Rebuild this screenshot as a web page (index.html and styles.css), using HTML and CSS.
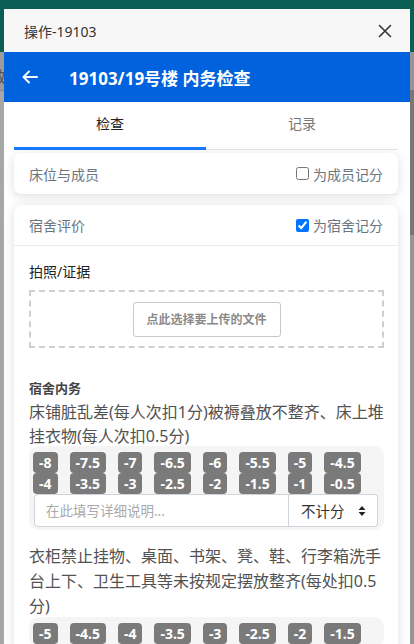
FILE: index.html
```html
<!DOCTYPE html>
<html lang="zh">
<head>
<meta charset="utf-8">
<title>操作-19103</title>
<link rel="stylesheet" href="styles.css">
</head>
<body>
<div class="page">
  <div class="page-top"></div>
  <div class="page-main">
    <div class="page-body">
      <div class="page-sub"><span class="page-glyph">效</span></div>
      <div class="page-rest"></div>
    </div>
    <div class="page-scroll"><div class="page-thumb"></div></div>
  </div>
</div>

<div class="modal">
  <div class="modal-head">
    <span class="modal-title">操作-19103</span>
    <svg class="close" width="14" height="14" viewBox="0 0 14 14"><path d="M1.5 1.5L12.5 12.5M12.5 1.5L1.5 12.5" stroke="#333" stroke-width="1.6" fill="none" stroke-linecap="round"/></svg>
  </div>
  <div class="appbar">
    <svg class="back" width="16" height="14" viewBox="0 0 16 14"><path d="M15 7H1.5M7 1.5L1.5 7 7 12.5" stroke="#fff" stroke-width="2" fill="none" stroke-linecap="round" stroke-linejoin="round"/></svg>
    <h1 class="appbar-title">19103/19号楼 内务检查</h1>
  </div>
  <div class="content">
    <div class="tabs">
      <div class="tab active">检查</div>
      <div class="tab">记录</div>
    </div>

    <div class="card card-single">
      <div class="card-head">
        <span class="card-label">床位与成员</span>
        <label class="chk"><input type="checkbox"> 为成员记分</label>
      </div>
    </div>
    <div class="sep"></div>

    <div class="card card-main">
      <div class="card-head bordered">
        <span class="card-label">宿舍评价</span>
        <label class="chk"><input type="checkbox" checked> 为宿舍记分</label>
      </div>
      <div class="card-body">
        <div class="field-label">拍照/证据</div>
        <div class="upload">
          <button class="upload-btn">点此选择要上传的文件</button>
        </div>

        <div class="section-title">宿舍内务</div>

        <div class="item">
          <p class="item-desc">床铺脏乱差(每人次扣1分)被褥叠放不整齐、床上堆挂衣物(每人次扣0.5分)</p>
          <div class="panel">
            <div class="badges">
              <div class="bcol"><span class="badge">-8</span><span class="badge">-4</span></div>
              <div class="bcol"><span class="badge">-7.5</span><span class="badge">-3.5</span></div>
              <div class="bcol"><span class="badge">-7</span><span class="badge">-3</span></div>
              <div class="bcol"><span class="badge">-6.5</span><span class="badge">-2.5</span></div>
              <div class="bcol"><span class="badge">-6</span><span class="badge">-2</span></div>
              <div class="bcol"><span class="badge">-5.5</span><span class="badge">-1.5</span></div>
              <div class="bcol"><span class="badge">-5</span><span class="badge">-1</span></div>
              <div class="bcol"><span class="badge">-4.5</span><span class="badge">-0.5</span></div>
            </div>
            <div class="input-group">
              <input class="note" type="text" placeholder="在此填写详细说明...">
              <div class="select">
                <span>不计分</span>
                <svg width="8" height="12" viewBox="0 0 8 12"><path d="M4 1L7.5 5H0.5Z M4 11L0.5 7H7.5Z" fill="#222"/></svg>
              </div>
            </div>
          </div>
        </div>

        <div class="item">
          <p class="item-desc">衣柜禁止挂物、桌面、书架、凳、鞋、行李箱洗手台上下、卫生工具等未按规定摆放整齐(每处扣0.5分)</p>
          <div class="panel">
            <div class="badges">
              <div class="bcol"><span class="badge">-5</span></div>
              <div class="bcol"><span class="badge">-4.5</span></div>
              <div class="bcol"><span class="badge">-4</span></div>
              <div class="bcol"><span class="badge">-3.5</span></div>
              <div class="bcol"><span class="badge">-3</span></div>
              <div class="bcol"><span class="badge">-2.5</span></div>
              <div class="bcol"><span class="badge">-2</span></div>
              <div class="bcol"><span class="badge">-1.5</span></div>
            </div>
          </div>
        </div>
      </div>
    </div>
  </div>
</div>
</body>
</html>
```

FILE: styles.css
```css
* { box-sizing: border-box; }
html, body { margin: 0; padding: 0; height: 100%; overflow: hidden; }
body {
  font-family: "Noto Sans", "Noto Sans CJK SC", sans-serif;
  background: #a6a6a6;
}

.page { height: 100%; display: flex; flex-direction: column; }
.page-top { height: 52px; background: #0b5e54; flex: none; }
.page-main { flex: 1; display: flex; min-height: 0; }
.page-body { flex: 1; display: flex; flex-direction: column; }
.page-sub {
  height: 39px; flex: none; background: #9c9c9c; border-bottom: 1px solid #8a8a8a;
  padding-top: 12px; font-size: 16px; color: #555;
}
.page-glyph { margin-left: -10px; }
.page-rest { flex: 1; background: #a7a7a7; }
.page-scroll { width: 15px; flex: none; background: #959595; padding-top: 38px; }
.page-thumb { height: 145px; background: #777; }

.modal {
  position: fixed; top: 9px; left: 4px; width: 406px; bottom: 0;
  background: #fff; display: flex; flex-direction: column; overflow: hidden;
}
.modal-head {
  height: 43px; flex: none; background: #f7f7f7;
  display: flex; align-items: center; justify-content: space-between;
  padding: 0 18px 0 20px;
}
.modal-title { font-size: 14px; color: #333; }
.close { display: block; }

.appbar {
  height: 50px; flex: none; background: #0062dc;
  display: flex; align-items: center; padding-left: 18px;
}
.back { display: block; }
.appbar-title {
  margin: 0 0 0 31px; color: #fff; font-size: 17px; font-weight: 700;
}

.content { flex: 1; min-height: 0; padding: 0 12px 0 10px; }

.tabs { display: flex; height: 48px; border-bottom: 1px solid #e6e6e6; }
.tab {
  flex: 1; display: flex; align-items: center; justify-content: center;
  font-size: 14px; color: #777; padding-bottom: 6px;
}
.tab.active { color: #222; box-shadow: inset 0 -3px 0 #1677ff; margin-bottom: -1px; }

.card {
  background: #fff; border-radius: 8px;
  box-shadow: 0 2px 12px rgba(0,0,0,0.13);
}
.card-single { margin-top: 3px; }
.sep { height: 1px; background: #e8e8e8; }
.card-main { margin-top: 10px; border-bottom-left-radius: 0; border-bottom-right-radius: 0; }
.card-head {
  height: 41px; display: flex; align-items: center; justify-content: space-between;
  padding: 0 15px;
}
.card-head.bordered { border-bottom: 1px solid #e9e9e9; }
.card-label { font-size: 14px; color: #6c757d; }
.chk { font-size: 14px; color: #6c757d; display: flex; align-items: center; }
.chk input { width: 13px; height: 13px; margin: 0 4px 0 0; accent-color: #0075ff; }

.card-body { padding: 16px 14px 10px 15px; }
.field-label { font-size: 14px; color: #222; font-weight: 400; line-height: 20px; }
.upload {
  margin-top: 8px; height: 58px; border: 2px dashed #cfcfcf;
  display: flex; align-items: center; justify-content: center;
}
.upload-btn {
  width: 148px; height: 35px; background: #fff; border: 1px solid #c8c8c8; border-radius: 3px;
  font-family: inherit; font-size: 12px; font-weight: 700; color: #8a8a8a; padding: 0;
}

.section-title { margin-top: 30px; font-size: 13px; font-weight: 700; color: #444; line-height: 20px; }

.item-desc { margin: 2px 0 0; font-size: 16px; line-height: 24px; color: #525252; }
.item + .item { margin-top: 14px; }
.item + .item .item-desc { line-height: 25px; }
.panel { background: #f5f5f5; border-radius: 10px; padding: 6px 6px 3px 4px; margin-top: -2px; }

.badges { display: flex; gap: 12px; }
.bcol { display: flex; flex-direction: column; }
.badge {
  display: block; background: #7a7a7a; color: #fff; font-weight: 700; font-size: 14px;
  line-height: 21px; height: 21px; padding: 0 6px; border-radius: 4px; text-align: center;
}

.input-group { display: flex; height: 33px; margin: 0 0 0 1px; }
.note {
  flex: 1; min-width: 0; border: 1px solid #ced4da; border-radius: 4px 0 0 4px;
  padding: 0 11px; font-family: inherit; font-size: 13.5px; color: #333; background: #fff;
}
.note::placeholder { color: #aaa; }
.select {
  width: 89px; flex: none; border: 1px solid #ced4da; border-left: none; border-radius: 0 4px 4px 0;
  background: #fff; display: flex; align-items: center; justify-content: space-between;
  padding: 0 11px 0 12px; font-size: 14.5px; color: #333;
}
```
